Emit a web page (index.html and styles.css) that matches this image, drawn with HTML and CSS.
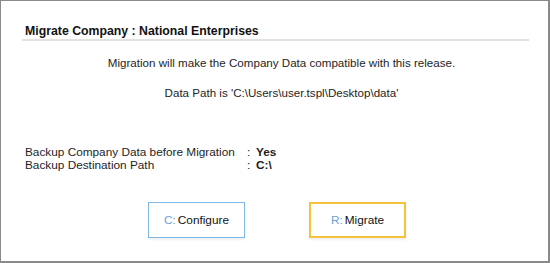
FILE: index.html
```html
<!DOCTYPE html>
<html lang="en">
  <head>
    <meta charset="utf-8"/>
    <title>Migrate Company</title>
    <link rel="stylesheet" href="styles.css">
  </head>
  <body>
    <div class="dialog">
      <h1 class="title">Migrate Company : National Enterprises</h1>
      <p class="msg">Migration will make the Company Data compatible with this release.</p>
      <p class="msg path">Data Path is 'C:\Users\user.tspl\Desktop\data'</p>
      <table class="info">
        <tr>
          <td class="label">Backup Company Data before Migration</td>
          <td class="colon">:</td>
          <td class="value">Yes</td>
        </tr>
        <tr>
          <td class="label">Backup Destination Path</td>
          <td class="colon">:</td>
          <td class="value">C:\</td>
        </tr>
      </table>
      <div class="buttons">
        <div class="btn configure"><span class="key">C:</span> Configure</div>
        <div class="btn migrate"><span class="key">R:</span> Migrate</div>
      </div>
    </div>
  </body>
</html>
```

FILE: styles.css
```css
html, body {
  margin: 0;
  padding: 0;
  background: #fff;
}
.dialog {
  box-sizing: border-box;
  width: 550px;
  height: 263px;
  border: solid 1px #8a8a8a;
  border-right-width: 2px;
  border-bottom-width: 2px;
  padding: 0 19px 0 21px;
  font-family: "Liberation Sans", Arial, sans-serif;
  color: #1e1e1e;
}
.title {
  margin: 0;
  padding: 22px 0 0 3px;
  height: 16px;
  font-size: 12.3px;
  font-weight: bold;
  line-height: 16px;
  color: #111;
  border-bottom: solid 2px #e2e2de;
}
.msg {
  margin: 15px 0 0 0;
  padding-left: 12px;
  text-align: center;
  font-size: 11.6px;
  line-height: 14px;
}
.path {
  margin-top: 16px;
}
.info {
  margin: 46px 0 0 3px;
  border-spacing: 0;
  font-size: 11.8px;
  line-height: 13px;
}
.info td {
  padding: 0;
}
.label {
  width: 222px;
}
.colon {
  width: 9px;
}
.value {
  font-weight: bold;
}
.buttons {
  display: flex;
  gap: 64px;
  margin: 30px 0 0 126px;
}
.btn {
  box-sizing: border-box;
  width: 97px;
  height: 36px;
  display: flex;
  align-items: center;
  justify-content: center;
  font-size: 11.8px;
  color: #111;
  box-shadow: 0 2px 2px rgba(0, 0, 0, 0.06);
}
.configure {
  border: solid 1px #7db8e6;
}
.migrate {
  border: solid 2px #f6c23a;
}
.key {
  color: #6a9fd6;
  margin-right: 2px;
}
```
